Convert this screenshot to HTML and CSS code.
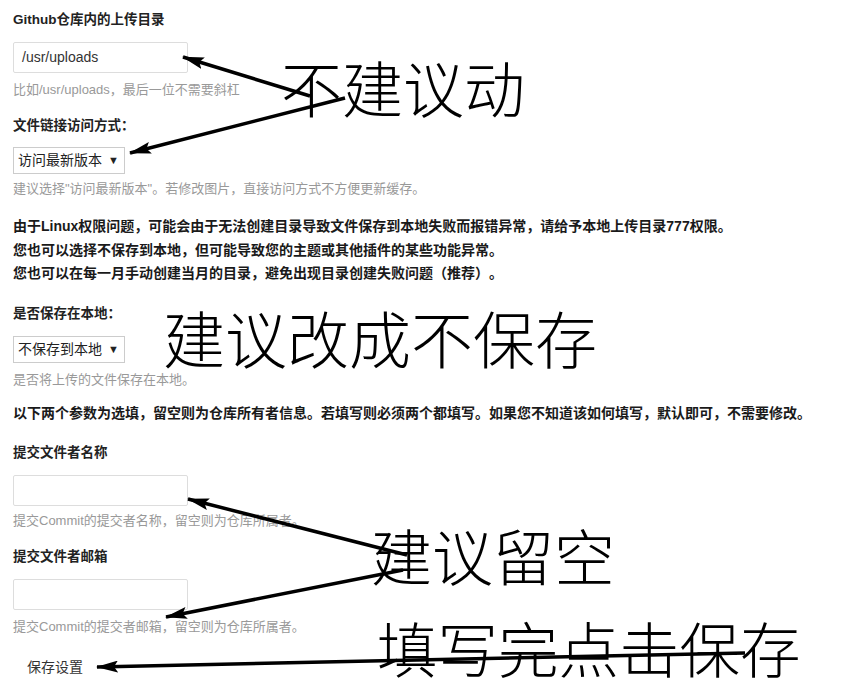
FILE: index.html
```html
<!DOCTYPE html>
<html lang="zh-CN">
<head>
<meta charset="utf-8">
<title>Github上传设置</title>
<link rel="stylesheet" href="styles.css">
</head>
<body>
<div class="form">
  <div class="label">Github仓库内的上传目录</div>
  <div class="input input-gap">/usr/uploads</div>
  <div class="hint hint-gap">比如/usr/uploads，最后一位不需要斜杠</div>

  <div class="label label-gap">文件链接访问方式：</div>
  <div class="select select-gap">访问最新版本<span class="caret">▼</span></div>
  <div class="hint hint-gap-s">建议选择"访问最新版本"。若修改图片，直接访问方式不方便更新缓存。</div>

  <div class="notice notice-gap">
    由于Linux权限问题，可能会由于无法创建目录导致文件保存到本地失败而报错异常，请给予本地上传目录777权限。<br>
    您也可以选择不保存到本地，但可能导致您的主题或其他插件的某些功能异常。<br>
    您也可以在每一月手动创建当月的目录，避免出现目录创建失败问题（推荐）。
  </div>

  <div class="label label-gap-l">是否保存在本地：</div>
  <div class="select select-gap-l">不保存到本地<span class="caret">▼</span></div>
  <div class="hint hint-gap">是否将上传的文件保存在本地。</div>

  <div class="notice notice-gap-s">以下两个参数为选填，留空则为仓库所有者信息。若填写则必须两个都填写。如果您不知道该如何填写，默认即可，不需要修改。</div>

  <div class="label label-gap-l">提交文件者名称</div>
  <div class="input input-gap"></div>
  <div class="hint hint-gap-s">提交Commit的提交者名称，留空则为仓库所属者。</div>

  <div class="label label-gap">提交文件者邮箱</div>
  <div class="input input-gap"></div>
  <div class="hint hint-gap">提交Commit的提交者邮箱，留空则为仓库所属者。</div>

  <div class="button-row"><span class="button">保存设置</span></div>
</div>

<div class="note note-1">不建议动</div>
<div class="note note-2">建议改成不保存</div>
<div class="note note-3">建议留空</div>
<div class="note note-4">填写完点击保存</div>

<svg class="arrows" width="841" height="684" viewBox="0 0 841 684">
  <defs>
    <marker id="head" markerUnits="userSpaceOnUse" markerWidth="24" markerHeight="12" refX="21" refY="6" orient="auto">
      <path d="M0,0 L22,6 L0,12 L4,6 Z" fill="#000"/>
    </marker>
  </defs>
  <line x1="310" y1="96" x2="183" y2="57" marker-end="url(#head)"/>
  <line x1="345" y1="98" x2="130" y2="153" marker-end="url(#head)"/>
  <line x1="407" y1="555" x2="188" y2="499" marker-end="url(#head)"/>
  <line x1="403" y1="570" x2="166" y2="617" marker-end="url(#head)"/>
  <line x1="745" y1="653" x2="97" y2="667" marker-end="url(#head)"/>
</svg>
</body>
</html>
```
FILE: styles.css
```css
html, body {
  margin: 0;
  padding: 0;
  background: #fff;
}
body {
  width: 841px;
  height: 684px;
  overflow: hidden;
  position: relative;
  font-family: "Liberation Sans", "Noto Sans CJK SC", sans-serif;
  color: #222;
  text-spacing-trim: space-all;
}
.form {
  padding: 10px 13px 0 13px;
  display: flex;
  flex-direction: column;
  align-items: flex-start;
}
.label {
  font-size: 13.5px;
  line-height: 20px;
  font-weight: bold;
  color: #222;
}
.label-gap { margin-top: 16px; }
.label-gap-l { margin-top: 18px; }
.input {
  box-sizing: border-box;
  width: 175px;
  height: 31px;
  border: 1px solid #ddd;
  border-radius: 2px;
  padding: 0 8px;
  font-size: 14px;
  line-height: 29px;
  color: #333;
}
.input-gap { margin-top: 12px; }
.select {
  box-sizing: border-box;
  width: 112px;
  height: 27px;
  border: 1px solid #ccc;
  padding: 0 4px;
  font-size: 14px;
  line-height: 25px;
  color: #222;
  display: flex;
  align-items: center;
}
.caret {
  font-size: 11px;
  margin-left: 6px;
}
.select-gap { margin-top: 11px; }
.select-gap-l { margin-top: 12px; }
.hint {
  font-size: 13px;
  line-height: 20px;
  color: #999;
}
.hint-gap { margin-top: 7px; }
.hint-gap-s { margin-top: 5px; }
.notice {
  font-size: 14px;
  line-height: 23.5px;
  font-weight: bold;
  color: #1a1a1a;
}
.notice-gap { margin-top: 16px; }
.notice-gap-s { margin-top: 12px; }
.button-row {
  margin-top: 19px;
}
.button {
  display: inline-block;
  padding: 0 14px;
  font-size: 14px;
  line-height: 22px;
  color: #333;
}
.note {
  position: absolute;
  font-family: "Noto Sans CJK SC", sans-serif;
  font-weight: 300;
  line-height: 1;
  color: #000;
  white-space: nowrap;
}
.note-1 { left: 281px; top: 56px; font-size: 61px; }
.note-2 { left: 163px; top: 306px; font-size: 62px; }
.note-3 { left: 371px; top: 524px; font-size: 61px; }
.note-4 { left: 377px; top: 617px; font-size: 60.5px; }
.arrows {
  position: absolute;
  left: 0;
  top: 0;
}
.arrows line {
  stroke: #000;
  stroke-width: 3.5;
}
```
